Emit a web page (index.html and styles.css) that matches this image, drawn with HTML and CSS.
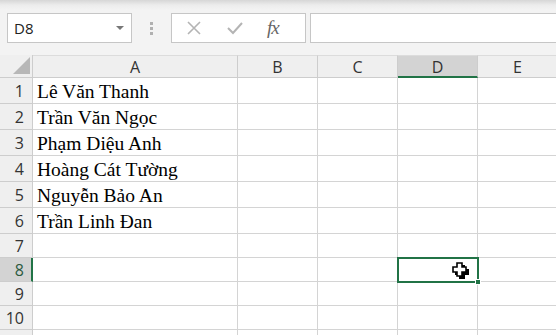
FILE: index.html
```html
<!DOCTYPE html>
<html>
<head>
<meta charset="utf-8">
<link rel="stylesheet" href="styles.css">
</head>
<body>
<div class="app">
  <div class="fbar">
    <div class="namebox">
      <span class="ref">D8</span>
      <svg class="caret" width="8" height="5" viewBox="0 0 8 5"><path d="M0 0H8L4 4Z" fill="#777"/></svg>
    </div>
    <div class="grip"><i></i><i></i><i></i></div>
    <div class="fxbox">
      <svg width="16" height="16" viewBox="0 0 16 16"><path d="M2 2L14 14M14 2L2 14" stroke="#b4b4b4" stroke-width="1.6" fill="none"/></svg>
      <svg width="18" height="16" viewBox="0 0 18 16"><path d="M2 8L7 13L16 3" stroke="#b4b4b4" stroke-width="2" fill="none"/></svg>
      <span class="fx">fx</span>
    </div>
    <div class="input"></div>
  </div>
  <div class="sheet">
    <div class="grid">
      <div class="h corner"><svg width="17" height="17" viewBox="0 0 17 17"><path d="M17 0V17H0Z" fill="#b7b7b7"/></svg></div>
      <div class="h col">A</div>
      <div class="h col">B</div>
      <div class="h col">C</div>
      <div class="h col sel">D</div>
      <div class="h col">E</div>

      <div class="h row">1</div><div class="c t">Lê Văn Thanh</div><div class="c"></div><div class="c"></div><div class="c"></div><div class="c"></div>
      <div class="h row">2</div><div class="c t">Trần Văn Ngọc</div><div class="c"></div><div class="c"></div><div class="c"></div><div class="c"></div>
      <div class="h row">3</div><div class="c t">Phạm Diệu Anh</div><div class="c"></div><div class="c"></div><div class="c"></div><div class="c"></div>
      <div class="h row">4</div><div class="c t">Hoàng Cát Tường</div><div class="c"></div><div class="c"></div><div class="c"></div><div class="c"></div>
      <div class="h row">5</div><div class="c t">Nguyễn Bảo An</div><div class="c"></div><div class="c"></div><div class="c"></div><div class="c"></div>
      <div class="h row">6</div><div class="c t">Trần Linh Đan</div><div class="c"></div><div class="c"></div><div class="c"></div><div class="c"></div>
      <div class="h row">7</div><div class="c"></div><div class="c"></div><div class="c"></div><div class="c"></div><div class="c"></div>
      <div class="h row rsel">8</div><div class="c"></div><div class="c"></div><div class="c"></div><div class="c"></div><div class="c"></div>
      <div class="h row">9</div><div class="c"></div><div class="c"></div><div class="c"></div><div class="c"></div><div class="c"></div>
      <div class="h row">10</div><div class="c"></div><div class="c"></div><div class="c"></div><div class="c"></div><div class="c"></div>
      <div class="h row"></div><div class="c"></div><div class="c"></div><div class="c"></div><div class="c"></div><div class="c"></div>
    </div>
    <div class="selbox"><span class="handle"></span></div>
    <svg class="cursor" width="22" height="22" viewBox="0 0 22 22">
      <path d="M9 5H15V9H19V15H15V19H9V15H5V9H9Z" fill="#000"/>
      <path d="M7 3H12V7H16V12H12V16H7V12H3V7H7Z" fill="#fff" stroke="#000" stroke-width="1.6"/>
    </svg>
  </div>
</div>
</body>
</html>
```
FILE: styles.css
```css
* { box-sizing: border-box; }
html, body { margin: 0; padding: 0; }
body {
  width: 556px;
  height: 335px;
  overflow: hidden;
  background: #fff;
  font-family: "Open Sans", "Noto Sans", sans-serif;
}
.app { width: 556px; height: 335px; overflow: hidden; }
.fbar {
  height: 55px;
  background: linear-gradient(to bottom, #d6d6d6 0px, #ececec 5px, #f3f3f3 10px, #f3f3f3 100%);
  display: flex;
  align-items: flex-start;
  padding-top: 13px;
  padding-left: 7px;
}
.namebox {
  width: 125px;
  height: 30px;
  background: #fff;
  border: 1px solid #c6c6c6;
  display: flex;
  align-items: center;
  justify-content: space-between;
  padding: 0 7px 0 6px;
}
.ref { font-size: 15px; color: #222; }
.caret { margin-top: 1px; }
.grip {
  width: 39px;
  height: 30px;
  display: flex;
  flex-direction: column;
  align-items: center;
  justify-content: center;
  gap: 2px;
}
.grip i { display: block; width: 3px; height: 3px; background: #b0b0b0; }
.fxbox {
  width: 135px;
  height: 30px;
  background: #fff;
  border: 1px solid #c6c6c6;
  display: flex;
  align-items: center;
  padding-left: 14px;
  gap: 24px;
}
.fx {
  font-family: "Liberation Serif", serif;
  font-style: italic;
  font-size: 19px;
  color: #666;
  margin-left: -1px;
  letter-spacing: -1px;
}
.input {
  flex: 1;
  margin-left: 4px;
  height: 30px;
  background: #fff;
  border: 1px solid #c6c6c6;
  border-right: none;
}
.sheet { position: relative; }
.grid {
  display: grid;
  grid-template-columns: 33px 205px 80px 80px 80px 80px;
  grid-template-rows: 23px repeat(6, 26px) repeat(4, 24px) 24px;
}
.h {
  background: #efefef;
  border-right: 1px solid #cdcdcd;
  border-bottom: 1px solid #cdcdcd;
  color: #333;
  font-size: 16px;
  display: flex;
  align-items: center;
  justify-content: center;
}
.corner { justify-content: flex-end; align-items: flex-end; padding: 0 2px 3px 0; }
.col { border-top: 1px solid #dcdcdc; padding-top: 1px; }
.col.sel {
  background: #d3d3d3;
  border-bottom: 2px solid #217346;
  color: #333;
}
.row { justify-content: flex-end; padding-right: 8px; padding-top: 1px; }
.row.rsel {
  background: #d3d3d3;
  border-right: 2px solid #217346;
  padding-right: 7px;
  color: #2b5a3f;
}
.c {
  border-right: 1px solid #d4d4d4;
  border-bottom: 1px solid #d4d4d4;
}
.t {
  font-family: "Liberation Serif", "Times New Roman", serif;
  font-size: 19.5px;
  color: #000;
  padding-left: 4px;
  display: flex;
  align-items: flex-end;
  padding-bottom: 0;
  white-space: nowrap;
}
.selbox {
  position: absolute;
  left: 397px;
  top: 202px;
  width: 82px;
  height: 26px;
  border: 2px solid #217346;
}
.handle {
  position: absolute;
  right: -4px;
  bottom: -4px;
  width: 6px;
  height: 6px;
  background: #217346;
  border: 1px solid #fff;
}
.cursor { position: absolute; left: 450px; top: 205px; }
```
